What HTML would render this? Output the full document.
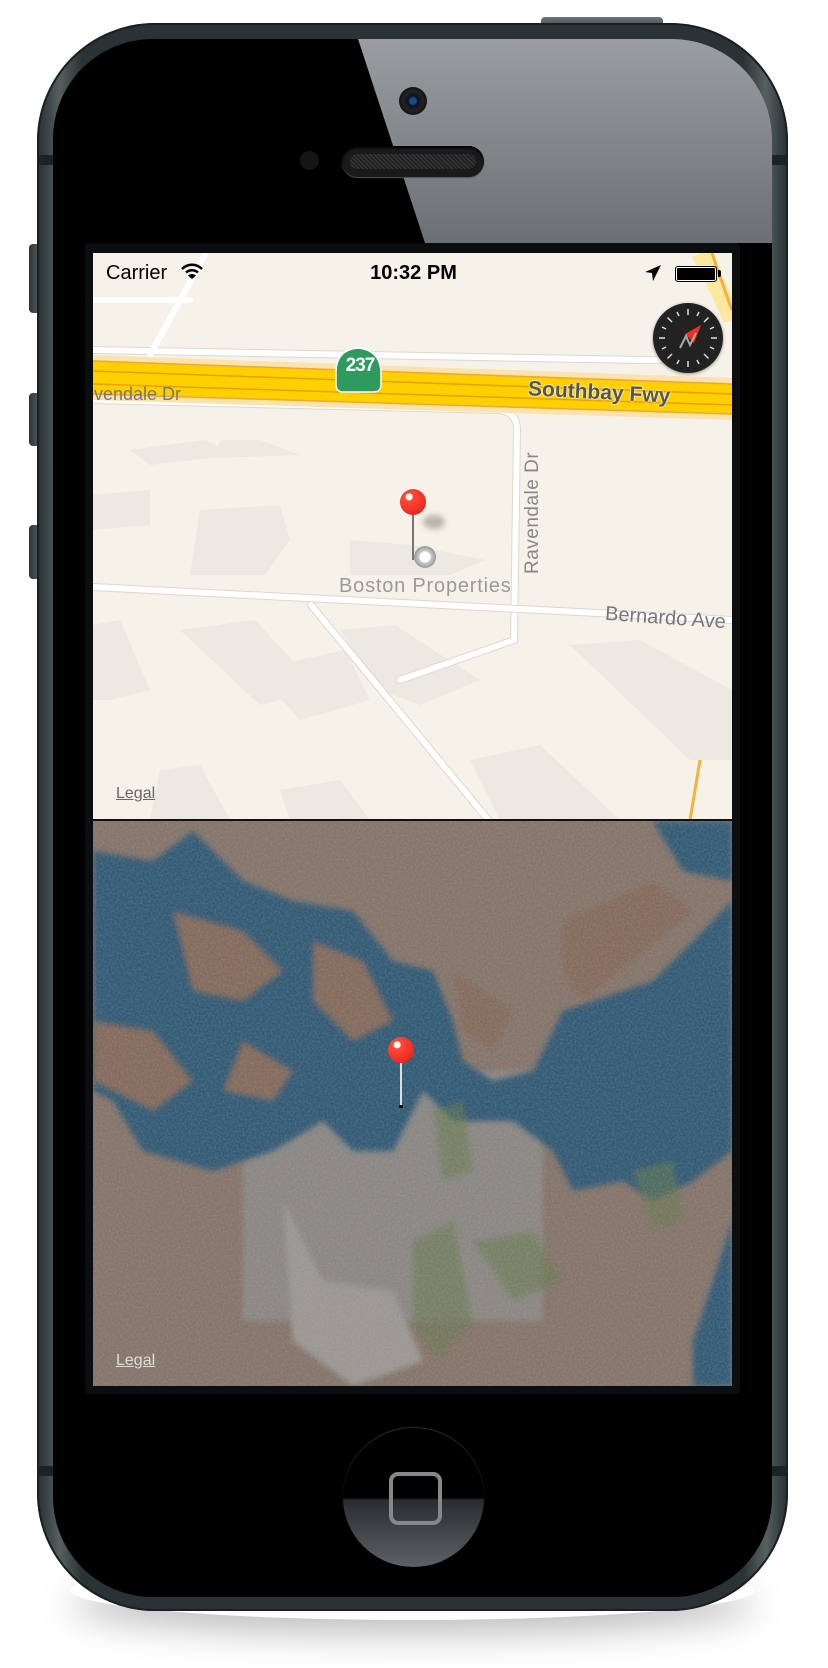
<!DOCTYPE html>
<html><head><meta charset="utf-8"><style>
html,body{margin:0;padding:0;background:#fff;width:828px;height:1668px;overflow:hidden;position:relative;font-family:"Liberation Sans",sans-serif}
.a{position:absolute}
</style></head><body>
<!-- shadow -->
<div class="a" style="left:70px;top:1560px;width:685px;height:60px;border-radius:50%;box-shadow:0 15px 35px rgba(0,0,0,0.25);"></div>
<!-- buttons -->
<div class="a" style="left:541px;top:17px;width:122px;height:14px;background:linear-gradient(#6a7376,#3a4447);border-radius:4px 4px 0 0"></div>
<div class="a" style="left:29px;top:244px;width:12px;height:69px;background:linear-gradient(90deg,#2c3437,#5a6467);border-radius:4px 0 0 4px"></div>
<div class="a" style="left:29px;top:393px;width:12px;height:53px;background:linear-gradient(90deg,#2c3437,#5a6467);border-radius:4px 0 0 4px"></div>
<div class="a" style="left:29px;top:525px;width:12px;height:54px;background:linear-gradient(90deg,#2c3437,#5a6467);border-radius:4px 0 0 4px"></div>
<!-- body -->
<div class="a" style="left:37px;top:23px;width:751px;height:1588px;border-radius:118px;background:linear-gradient(90deg,#262e31,#56605f 3%,#2a3235 6%,#2a3235 94%,#56605f 97%,#262e31);box-shadow:inset 0 0 0 2px #1a2022"></div>
<div class="a" style="left:37px;top:155px;width:751px;height:10px;background:#1c2325"></div>
<div class="a" style="left:37px;top:1466px;width:751px;height:10px;background:#1c2325"></div>
<div class="a" style="left:53px;top:39px;width:719px;height:1558px;border-radius:100px;background:#000;overflow:hidden">
  <div class="a" style="left:0;top:0;width:719px;height:204px;background:linear-gradient(#9a9da2,#6c6f73);clip-path:polygon(305px 0,719px 0,719px 204px,372px 204px)"></div>
</div>
<!-- camera / sensor / speaker -->
<div class="a" style="left:399px;top:87px;width:28px;height:28px;border-radius:50%;background:radial-gradient(circle at 50% 50%,#1a4a8a 0 3px,#0c1420 5px,#222 10px,#111 14px)"></div>
<div class="a" style="left:300px;top:151px;width:19px;height:19px;border-radius:50%;background:#151515"></div>
<div class="a" style="left:342px;top:146px;width:142px;height:31px;border-radius:16px;background:#1a1a1a;box-shadow:inset 0 2px 2px #000,0 1px 1px #555"><div class="a" style="left:8px;top:8px;width:126px;height:15px;border-radius:8px;background:repeating-linear-gradient(45deg,#3a3a3a 0 1px,#222 1px 3px)"></div></div>
<!-- screen frame -->
<div class="a" style="left:85px;top:243px;width:655px;height:1151px;background:#0a0e10;border-radius:4px"></div>
<!-- map -->
<div class="a" style="left:93px;top:253px;width:639px;height:567px;background:#f6f2ea;overflow:hidden">
<svg width="639" height="567" style="position:absolute;left:0;top:0">
<g transform="translate(-93,-253)">
 <g fill="#ece8e2">
  <polygon points="130,450 205,440 235,455 150,465"/>
  <polygon points="220,440 260,440 300,455 215,458"/>
  <polygon points="93,495 150,490 150,525 93,530"/>
  <polygon points="200,510 280,505 290,540 265,575 190,575"/>
  <polygon points="350,540 410,545 485,560 450,575 350,575"/>
  <polygon points="180,630 255,620 320,690 260,705"/>
  <polygon points="255,670 345,650 370,700 300,720"/>
  <polygon points="93,625 120,620 150,690 110,700 93,700"/>
  <polygon points="340,630 395,625 480,680 420,705 380,690"/>
  <polygon points="570,645 640,640 732,690 732,760 690,760"/>
  <polygon points="160,770 200,765 230,820 150,820"/>
  <polygon points="280,790 340,780 370,820 290,820"/>
  <polygon points="470,760 540,745 620,820 500,820"/>
 </g>
 <g fill="none" stroke="#fff" stroke-width="6" stroke-linecap="round">
  <path d="M93,350 L640,360 Q670,362 690,350" stroke="#ddd8cf" stroke-width="8"/>
  <path d="M93,350 L640,360 Q670,362 690,350"/>
  <path d="M150,355 L205,255"/>
  <path d="M93,300 L190,300"/>
  <path d="M93,400 L500,410 Q517,412 517,430 L514,640 L400,680" stroke="#ddd8cf" stroke-width="8"/>
  <path d="M93,400 L500,410 Q517,412 517,430 L514,640 L400,680"/>
  <path d="M93,587 L732,620" stroke="#ddd8cf" stroke-width="8"/>
  <path d="M93,587 L732,620"/>
  <path d="M311,605 L490,822" stroke="#ddd8cf" stroke-width="8"/>
  <path d="M311,605 L490,822"/>
 </g>
 <path d="M700,253 Q725,300 732,320" stroke="#fde8a0" stroke-width="18" fill="none"/>
 <path d="M712,253 Q728,300 732,310 M700,760 L690,820" stroke="#f2b23c" stroke-width="3" fill="none"/>
 <polygon points="93,355 732,378 732,420 93,400" fill="#fbe3b0"/>
 <polygon points="93,361 732,384 732,414 93,394" fill="#ffd000"/>
 <path d="M93,371 L732,394 M93,384 L732,405" stroke="#e8a000" stroke-width="1.5"/>
 <path d="M93,361 L732,384 M93,394 L732,414" stroke="#f0a830" stroke-width="1.5"/>
 <path d="M336,372 Q336,350 358,348 Q380,350 381,372 L381,384 Q381,392 374,392 L343,392 Q336,392 336,384 Z" fill="#2e9a5e" stroke="#fff" stroke-width="1.5"/>
</g>
</svg>
<div class="a" style="left:243px;top:102px;width:48px;text-align:center;color:#fff;font:bold 19px 'Liberation Sans',sans-serif;letter-spacing:-1px">237</div>
<div class="a" style="left:1px;top:131px;color:#777;font-size:18px;white-space:nowrap">vendale Dr</div>
<div class="a" style="left:435px;top:128px;color:#555;font-weight:bold;font-size:21px;white-space:nowrap;transform:rotate(3deg);text-shadow:0 0 2px #fff,0 0 2px #fff">Southbay Fwy</div>
<div class="a" style="left:512px;top:354px;color:#777;font-size:20px;white-space:nowrap;transform:rotate(4deg)">Bernardo Ave</div>
<div class="a" style="left:375px;top:245px;width:130px;color:#888;font-size:19px;white-space:nowrap;transform:rotate(-90deg);letter-spacing:0.5px">Ravendale Dr</div>
<div class="a" style="left:246px;top:322px;color:#9a9a9a;font-size:20px;white-space:nowrap;letter-spacing:0.8px">Boston Properties</div>
<div class="a" style="left:23px;top:532px;color:#666;font-size:16px;text-decoration:underline">Legal</div>
<!-- pin -->
<div class="a" style="left:330px;top:262px;width:22px;height:14px;border-radius:50%;background:rgba(0,0,0,0.25);filter:blur(3px)"></div>
<div class="a" style="left:321px;top:293px;width:22px;height:22px;border-radius:50%;background:radial-gradient(circle at 50% 50%,#fff 0 5px,#ccc 6px,#999 11px)"></div>
<div class="a" style="left:319px;top:255px;width:2px;height:52px;background:#777"></div>
<div class="a" style="left:307px;top:236px;width:26px;height:26px;border-radius:50%;background:radial-gradient(circle at 35% 30%,#fff 0 3px,#ff4a3a 4px,#e01a10)"></div>
<!-- compass -->
<div class="a" style="left:560px;top:50px;width:70px;height:70px;border-radius:50%;background:#222;box-shadow:0 1px 3px rgba(0,0,0,0.4)">
<svg width="70" height="70"><g stroke="#ddd" stroke-width="1.5">
<line x1="35" y1="6" x2="35" y2="12"/><line x1="35" y1="58" x2="35" y2="64"/><line x1="6" y1="35" x2="12" y2="35"/><line x1="58" y1="35" x2="64" y2="35"/>
<line x1="14.5" y1="14.5" x2="19" y2="19"/><line x1="51" y1="51" x2="55.5" y2="55.5"/><line x1="55.5" y1="14.5" x2="51" y2="19"/><line x1="14.5" y1="55.5" x2="19" y2="51"/>
<line x1="24" y1="9" x2="26" y2="13"/><line x1="46" y1="9" x2="44" y2="13"/><line x1="24" y1="61" x2="26" y2="57"/><line x1="46" y1="61" x2="44" y2="57"/>
<line x1="9" y1="24" x2="13" y2="26"/><line x1="61" y1="24" x2="57" y2="26"/><line x1="9" y1="46" x2="13" y2="44"/><line x1="61" y1="46" x2="57" y2="44"/></g>
<polygon points="48,22 32,31 41,40" fill="#f03020"/>
<path d="M27,45 L33,33 L37,42 L43,30" stroke="#aaa" stroke-width="2" fill="none"/>
</svg></div>
<!-- status bar -->
<div class="a" style="left:13px;top:5px;font-size:20px;color:#000;line-height:30px">Carrier</div>
<svg class="a" style="left:88px;top:7px" width="22" height="22" viewBox="0 0 22 22"><path d="M1,9 A14,14 0 0 1 21,9" stroke="#000" stroke-width="2.5" fill="none"/><path d="M5,12.5 A9,9 0 0 1 17,12.5" stroke="#000" stroke-width="2.5" fill="none"/><path d="M11,19 L7,15.5 A6,6 0 0 1 15,15.5 Z" fill="#000"/></svg>
<div class="a" style="left:248px;top:5px;width:145px;text-align:center;font-size:20px;font-weight:bold;line-height:30px;color:#000">10:32 PM</div>
<svg class="a" style="left:551px;top:11px" width="18" height="18"><path d="M17,1 L1,8 L8,9 L9,17 Z" fill="#000"/></svg>
<div class="a" style="left:582px;top:13px;width:40px;height:14px;border:1.5px solid #000;border-radius:3px;background:#000;box-shadow:inset 0 0 0 1px #fff"></div>
<div class="a" style="left:625px;top:17px;width:3px;height:7px;background:#000;border-radius:0 2px 2px 0"></div>
</div>
<div class="a" style="left:93px;top:819px;width:639px;height:2px;background:#111"></div>
<!-- satellite -->
<div class="a" style="left:93px;top:821px;width:639px;height:565px;background:#7f7265;overflow:hidden">
<svg width="639" height="565" style="position:absolute;left:0;top:0">
<defs><filter id="n"><feTurbulence type="fractalNoise" baseFrequency="0.5" numOctaves="2" seed="3"/><feColorMatrix values="0 0 0 0 0.65  0 0 0 0 0.62  0 0 0 0 0.6  0 0 0 0.8 -0.25"/></filter>
<filter id="b"><feGaussianBlur stdDeviation="3"/></filter></defs>
<rect width="639" height="565" fill="#84746a"/>
<rect x="150" y="250" width="300" height="250" fill="#8a8783" filter="url(#b)"/>
<path d="M190,380 L230,460 L300,470 L330,540 L260,565 L200,520 Z" fill="#9a9793" filter="url(#b)"/>
<g fill="#335a74" filter="url(#b)">
<path d="M0,30 L60,40 L100,10 L150,60 L200,80 L260,90 L300,140 L340,150 L360,200 L370,240 L400,260 L440,250 L470,190 L560,160 L600,120 L639,80 L639,330 L600,360 L560,380 L530,360 L480,370 L460,330 L420,300 L360,300 L330,270 L300,330 L260,330 L230,300 L180,330 L120,350 L50,330 L20,280 L0,270 Z"/>
<path d="M0,100 L40,80 L80,120 L60,180 L20,200 L0,190 Z"/>
<path d="M560,0 L639,0 L639,60 L590,50 Z"/>
<path d="M639,400 L620,460 L600,520 L600,565 L639,565 Z"/>
</g>
<g fill="#836a5c" filter="url(#b)">
<path d="M80,90 L150,110 L190,150 L150,180 L100,170 Z"/>
<path d="M220,120 L270,140 L300,200 L260,220 L220,180 Z"/>
<path d="M360,150 L420,190 L400,230 L370,210 Z"/>
<path d="M470,100 L560,60 L600,90 L540,140 L490,180 L470,150 Z"/>
<path d="M0,200 L60,210 L100,260 L60,290 L20,270 L0,260 Z"/>
<path d="M150,220 L200,250 L180,280 L130,270 Z"/>
</g>
<g fill="#687a50" opacity="0.55" filter="url(#b)">
<path d="M340,290 L370,280 L380,350 L350,360 Z"/>
<path d="M320,420 L360,400 L380,500 L345,540 L320,500 Z"/>
<path d="M380,420 L440,410 L470,460 L420,480 Z"/>
<path d="M540,350 L580,340 L590,400 L560,410 Z"/>
</g>
<rect width="639" height="565" filter="url(#n)" opacity="0.4"/>
</svg>
<div class="a" style="left:307px;top:229px;width:2px;height:57px;background:#ddd"></div>
<div class="a" style="left:306px;top:284px;width:4px;height:3px;background:#111"></div>
<div class="a" style="left:295px;top:216px;width:26px;height:26px;border-radius:50%;background:radial-gradient(circle at 35% 30%,#fff 0 3px,#ff4a3a 4px,#e01a10)"></div>
<div class="a" style="left:23px;top:531px;color:#ddd;font-size:16px;text-decoration:underline">Legal</div>
</div>
<!-- home button -->
<div class="a" style="left:343px;top:1428px;width:141px;height:139px;border-radius:50%;background:linear-gradient(#000 0,#000 50%,#2a2c2f 52%,#5d6166 100%);box-shadow:0 -1px 1px #333"></div>
<div class="a" style="left:389px;top:1472px;width:45px;height:45px;border:4px solid #85878b;border-radius:9px"></div>
</body></html>
